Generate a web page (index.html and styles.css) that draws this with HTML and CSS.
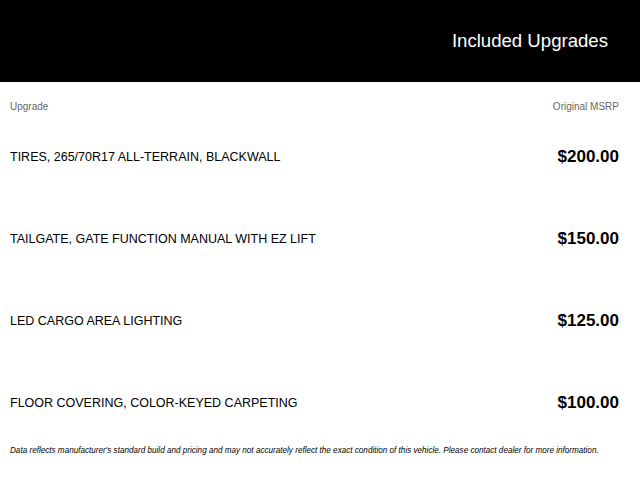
FILE: index.html
```html
<!DOCTYPE html>
<html>
<head>
<meta charset="utf-8">
<link rel="stylesheet" href="styles.css">
</head>
<body>
<header class="banner">
  <h1 class="banner-title">Included Upgrades</h1>
</header>
<main class="upgrades">
  <div class="cols">
    <span>Upgrade</span>
    <span>Original MSRP</span>
  </div>
  <div class="row"><span class="name">TIRES, 265/70R17 ALL-TERRAIN, BLACKWALL</span><span class="price">$200.00</span></div>
  <div class="row"><span class="name">TAILGATE, GATE FUNCTION MANUAL WITH EZ LIFT</span><span class="price">$150.00</span></div>
  <div class="row"><span class="name">LED CARGO AREA LIGHTING</span><span class="price">$125.00</span></div>
  <div class="row"><span class="name">FLOOR COVERING, COLOR-KEYED CARPETING</span><span class="price">$100.00</span></div>
  <p class="note">Data reflects manufacturer's standard build and pricing and may not accurately reflect the exact condition of this vehicle. Please contact dealer for more information.</p>
</main>
</body>
</html>
```

FILE: styles.css
```css
* { box-sizing: border-box; }
html, body { margin: 0; padding: 0; background: #fff; }
body { font-family: "Liberation Sans", Arial, sans-serif; color: #000; }

.banner {
  height: 82px;
  background: #000;
  display: flex;
  justify-content: flex-end;
  align-items: flex-start;
  padding: 30px 32px 0 0;
}
.banner-title {
  margin: 0;
  font-weight: normal;
  font-size: 18.6px;
  line-height: 22px;
  color: #fff;
}

.upgrades { padding: 0 21px 0 10px; }

.cols {
  display: flex;
  justify-content: space-between;
  font-size: 10px;
  line-height: 12px;
  color: #666;
  padding-top: 19px;
  height: 34px;
}

.row {
  height: 82px;
  display: flex;
  justify-content: space-between;
  align-items: center;
}
.name { font-size: 12.5px; line-height: 16px; }
.price { font-size: 17px; line-height: 20px; font-weight: bold; }

.note {
  margin: 2px 0 0;
  font-size: 8.15px;
  line-height: 10px;
  font-style: italic;
  color: #000;
}
```
